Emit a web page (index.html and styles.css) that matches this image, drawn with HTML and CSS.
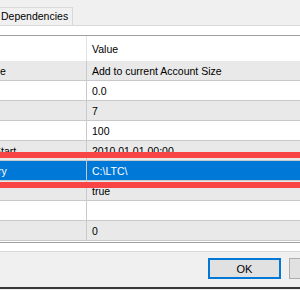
FILE: index.html
```html
<!DOCTYPE html>
<html lang="en">
<head>
    <meta charset="UTF-8">
    <title>Inputs</title>
    <link rel="stylesheet" href="styles.css">
</head>
<body>
    <div class="tabs">
        <div class="tab">Dependencies</div>
    </div>

    <div class="page">
        <div class="grid">
            <div class="row head">
                <div class="key"></div>
                <div class="val">Value</div>
            </div>
            <div class="row alt">
                <div class="key">e</div>
                <div class="val">Add to current Account Size</div>
            </div>
            <div class="row">
                <div class="key"></div>
                <div class="val">0.0</div>
            </div>
            <div class="row alt">
                <div class="key"></div>
                <div class="val">7</div>
            </div>
            <div class="row">
                <div class="key"></div>
                <div class="val">100</div>
            </div>
            <div class="row alt">
                <div class="key"><span class="cut-lg">Start</span></div>
                <div class="val">2010.01.01 00:00</div>
            </div>
            <div class="row selected">
                <div class="key"><span class="cut-sm">ry</span></div>
                <div class="val">C:\LTC\</div>
            </div>
            <div class="row alt">
                <div class="key"></div>
                <div class="val">true</div>
            </div>
            <div class="row">
                <div class="key"></div>
                <div class="val"></div>
            </div>
            <div class="row alt">
                <div class="key"></div>
                <div class="val">0</div>
            </div>
        </div>
    </div>

    <div class="footer">
        <button class="btn default">OK</button>
        <button class="btn">Cancel</button>
    </div>
    <div class="desktop"></div>

    <!-- annotation marks drawn over the selected row -->
    <div class="mark mark-top"></div>
    <div class="mark mark-bottom"></div>
</body>
</html>
```

FILE: styles.css
```css
body {
    margin: 0;
    width: 300px;
    height: 290px;
    overflow: hidden;
    position: relative;
    background-color: #f0f0f0;
    color: #000;
    font-family: 'Liberation Sans', Arial, sans-serif;
    font-size: 10.5px;
}

.tabs {
    height: 25px;
    border-bottom: 1px solid #d9d9d9;
    display: flex;
    align-items: flex-end;
}

.tab {
    width: 71px;
    height: 17px;
    line-height: 17px;
    padding-left: 1px;
    border-top: 1px solid #d9d9d9;
    border-right: 1px solid #d9d9d9;
    background-color: #f0f0f0;
    white-space: nowrap;
    overflow: hidden;
}

.page {
    background-color: #fff;
    height: 226px;
    padding-top: 9px;
    box-sizing: border-box;
    border-bottom: 1px solid #d9d9d9;
}

.grid {
    border-top: 1px solid #a0a0a0;
    border-bottom: 1px solid #a0a0a0;
    padding-bottom: 1px;
}

.row {
    display: flex;
    height: 18px;
    padding-top: 1px;
    line-height: 19px;
    border-bottom: 1px solid #c9c9c9;
    background-color: #fff;
    white-space: nowrap;
}

.row.head {
    height: 23px;
    padding-top: 2px;
    line-height: 23px;
    border-bottom: none;
}

.row.alt {
    background-color: #e9e9e9;
}

.row.selected {
    background-color: #0078d7;
    color: #fff;
}

.key {
    width: 86px;
    overflow: hidden;
    border-right: 1px solid #c9c9c9;
    margin-top: -1px;
    padding-top: 1px;
}

.head .key {
    border-right-color: #e3e3e3;
    margin-top: -2px;
    padding-top: 2px;
}

.cut-lg {
    margin-left: -6px;
}

.cut-sm {
    margin-left: -2px;
}

.val {
    flex: 1;
    padding-left: 5px;
    overflow: hidden;
}

.footer {
    display: flex;
    gap: 8px;
    padding: 6px 0 0 208px;
    height: 29px;
}

.btn {
    flex-shrink: 0;
    width: 73px;
    height: 21px;
    padding: 0;
    border: 1px solid #adadad;
    background-color: #e1e1e1;
    font-family: 'Liberation Sans', Arial, sans-serif;
    font-size: 11px;
    color: #000;
}

.btn.default {
    border: 2px solid #0078d7;
}

.desktop {
    height: 2px;
    background-color: #3a3a3a;
}

.mark {
    position: absolute;
    left: 0;
    right: 0;
    height: 6px;
    background-color: #f84444;
}

.mark-top {
    top: 152px;
}

.mark-bottom {
    top: 182px;
}
```
